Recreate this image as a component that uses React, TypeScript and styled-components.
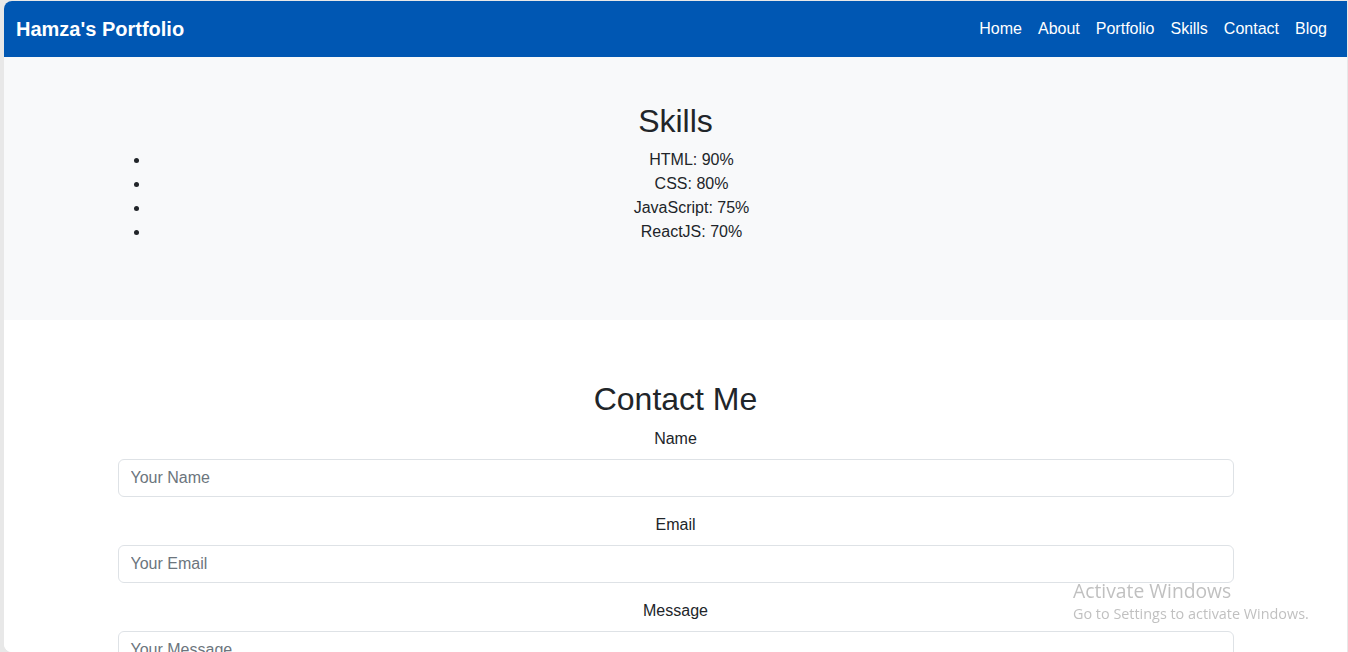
import React from 'react';
import styled, { createGlobalStyle } from 'styled-components';

const GlobalStyle = createGlobalStyle`
  * { box-sizing: border-box; }
  html, body {
    margin: 0;
    padding: 0;
    background: #e8e8e8;
    font-family: "Liberation Sans", Arial, sans-serif;
    color: #212529;
    overflow: hidden;
  }
`;

const Frame = styled.div`
  margin: 1px 1px 0 4px;
  height: 651px;
  background: #FFFFFF;
  border-radius: 8px 0 0 8px;
  overflow: hidden;
`;

const Navbar = styled.nav`
  display: flex;
  justify-content: space-between;
  align-items: center;
  height: 56px;
  padding: 8px 12px;
  background: #0057b3;
`;

const Brand = styled.a`
  font-size: 20px;
  line-height: 30px;
  font-weight: bold;
  color: #FFFFFF;
  text-decoration: none;
`;

const NavList = styled.ul`
  display: flex;
  list-style: none;
  margin: 0;
  padding: 0;
`;

const NavLink = styled.a`
  display: block;
  padding: 8px;
  font-size: 16px;
  line-height: 24px;
  color: #FFFFFF;
  text-decoration: none;
`;

const Section = styled.section<{ $light?: boolean; $pad: string }>`
  background: ${p => (p.$light ? '#f8f9fa' : '#FFFFFF')};
  padding: ${p => p.$pad};
`;

const Container = styled.div`
  max-width: 1140px;
  margin: 0 auto;
  padding: 0 12px;
  text-align: center;
`;

const Title = styled.h2`
  margin: 0 0 8px;
  font-size: 32px;
  line-height: 1.2;
  font-weight: 500;
`;

const SkillList = styled.ul`
  margin: 0;
  padding-left: 32px;
  font-size: 16px;
  line-height: 24px;
`;

const FormGroup = styled.div`
  margin-bottom: 16px;
`;

const Label = styled.label`
  display: block;
  margin-bottom: 8px;
  font-size: 16px;
  line-height: 24px;
`;

const Field = styled.input`
  display: block;
  width: 100%;
  height: 38px;
  padding: 6px 12px;
  font-family: inherit;
  font-size: 16px;
  line-height: 24px;
  color: #212529;
  background: #FFFFFF;
  border: 1px solid #dee2e6;
  border-radius: 6px;
  outline: none;

  &::placeholder { color: #6c757d; }
`;

const TextArea = styled(Field).attrs({ as: 'textarea' })`
  height: auto;
  resize: vertical;
`;

const Watermark = styled.div`
  position: fixed;
  left: 1073px;
  top: 578px;
  font-family: "Open Sans", "Noto Sans", sans-serif;
  color: rgba(150, 150, 150, 0.6);
  pointer-events: none;
`;

const WatermarkTitle = styled.div`
  font-size: 19.3px;
  line-height: 26px;
`;

const WatermarkText = styled.div`
  font-size: 14.4px;
  line-height: 19px;
`;

const links = ['Home', 'About', 'Portfolio', 'Skills', 'Contact', 'Blog'];

const skills = [
  { name: 'HTML', level: 90 },
  { name: 'CSS', level: 80 },
  { name: 'JavaScript', level: 75 },
  { name: 'ReactJS', level: 70 },
];

const App = (): JSX.Element => (
  <>
    <GlobalStyle />
    <Frame>
      <Navbar>
        <Brand href="#">Hamza's Portfolio</Brand>
        <NavList>
          {links.map(l => (
            <li key={l}>
              <NavLink href={'#' + l.toLowerCase()}>{l}</NavLink>
            </li>
          ))}
        </NavList>
      </Navbar>

      <Section $light $pad="45px 0 76px" id="skills">
        <Container>
          <Title>Skills</Title>
          <SkillList>
            {skills.map(s => (
              <li key={s.name}>{s.name}: {s.level}%</li>
            ))}
          </SkillList>
        </Container>
      </Section>

      <Section $pad="60px 0 48px" id="contact">
        <Container>
          <Title>Contact Me</Title>
          <form>
            <FormGroup>
              <Label htmlFor="name">Name</Label>
              <Field id="name" type="text" placeholder="Your Name" />
            </FormGroup>
            <FormGroup>
              <Label htmlFor="email">Email</Label>
              <Field id="email" type="email" placeholder="Your Email" />
            </FormGroup>
            <FormGroup>
              <Label htmlFor="message">Message</Label>
              <TextArea id="message" rows={4} placeholder="Your Message" />
            </FormGroup>
          </form>
        </Container>
      </Section>
    </Frame>
    <Watermark>
      <WatermarkTitle>Activate Windows</WatermarkTitle>
      <WatermarkText>Go to Settings to activate Windows.</WatermarkText>
    </Watermark>
  </>
);

export default App;
